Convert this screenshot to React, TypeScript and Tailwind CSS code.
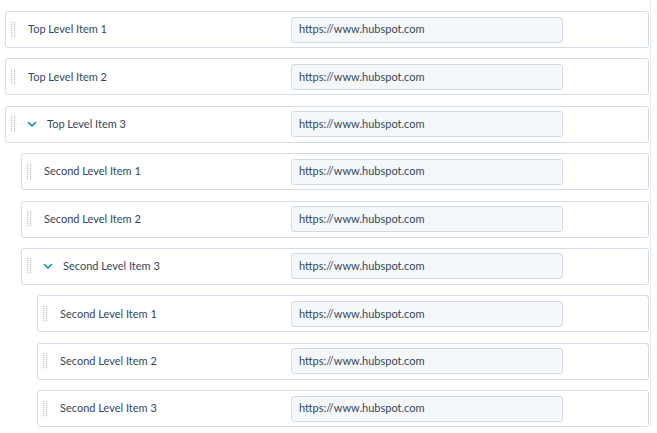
import React from "react";

type Item = { label: string; level: 0 | 1 | 2; expanded?: boolean };

const items: Item[] = [
  { label: "Top Level Item 1", level: 0 },
  { label: "Top Level Item 2", level: 0 },
  { label: "Top Level Item 3", level: 0, expanded: true },
  { label: "Second Level Item 1", level: 1 },
  { label: "Second Level Item 2", level: 1 },
  { label: "Second Level Item 3", level: 1, expanded: true },
  { label: "Second Level Item 1", level: 2 },
  { label: "Second Level Item 2", level: 2 },
  { label: "Second Level Item 3", level: 2 },
];

const indentClass = ["ml-0", "ml-[16px]", "ml-[32px]"];
const labelWidth = ["w-[285px]", "w-[269px]", "w-[253px]"];

function DragHandle() {
  return (
    <svg width="5" height="16" viewBox="0 0 5 16" className="shrink-0">
      {Array.from({ length: 8 }).map((_, i) => (
        <g key={i} fill="#c3ccd8">
          <rect x="0" y={i * 2} width="1.3" height="1.3" />
          <rect x="3" y={i * 2} width="1.3" height="1.3" />
        </g>
      ))}
    </svg>
  );
}

function Chevron() {
  return (
    <svg width="10" height="7" viewBox="0 0 10 7" className="shrink-0">
      <path d="M1.5 1.5 L5 5 L8.5 1.5" fill="none" stroke="#0091ae" strokeWidth="1.6" strokeLinecap="round" strokeLinejoin="round" />
    </svg>
  );
}

function Row({ item }: { item: Item }) {
  return (
    <div
      className={`${indentClass[item.level]} flex h-[37px] items-center rounded-[3px] border border-[#d3dce6] bg-white`}
    >
      <div className={`${labelWidth[item.level]} flex h-full items-center shrink-0`}>
        <div className="ml-[5px]">
          <DragHandle />
        </div>
        {item.expanded ? (
          <>
            <div className="ml-[11px]">
              <Chevron />
            </div>
            <span className="ml-[10px] text-[11px] text-[#33475b]">{item.label}</span>
          </>
        ) : (
          <span className="ml-[12px] text-[11px] text-[#33475b]">{item.label}</span>
        )}
      </div>
      <div className="flex h-[26px] w-[272px] items-center rounded-[3px] border border-[#d3dce6] bg-[#f5f8fa] pl-[7px] text-[11px] text-[#33475b]">
        https://www.hubspot.com
      </div>
    </div>
  );
}

export default function App() {
  return (
    <div
      className="min-h-[433px] w-[657px] bg-white"
      style={{ fontFamily: "Lato, 'Noto Sans', sans-serif" }}
    >
      <div className="w-[651px] border-r border-[#e6ebf1] pl-[5px] pr-[1px] pt-[11px]">
        <div className="flex flex-col gap-[10.375px]">
          {items.map((it, i) => (
            <Row key={i} item={it} />
          ))}
        </div>
      </div>
    </div>
  );
}
